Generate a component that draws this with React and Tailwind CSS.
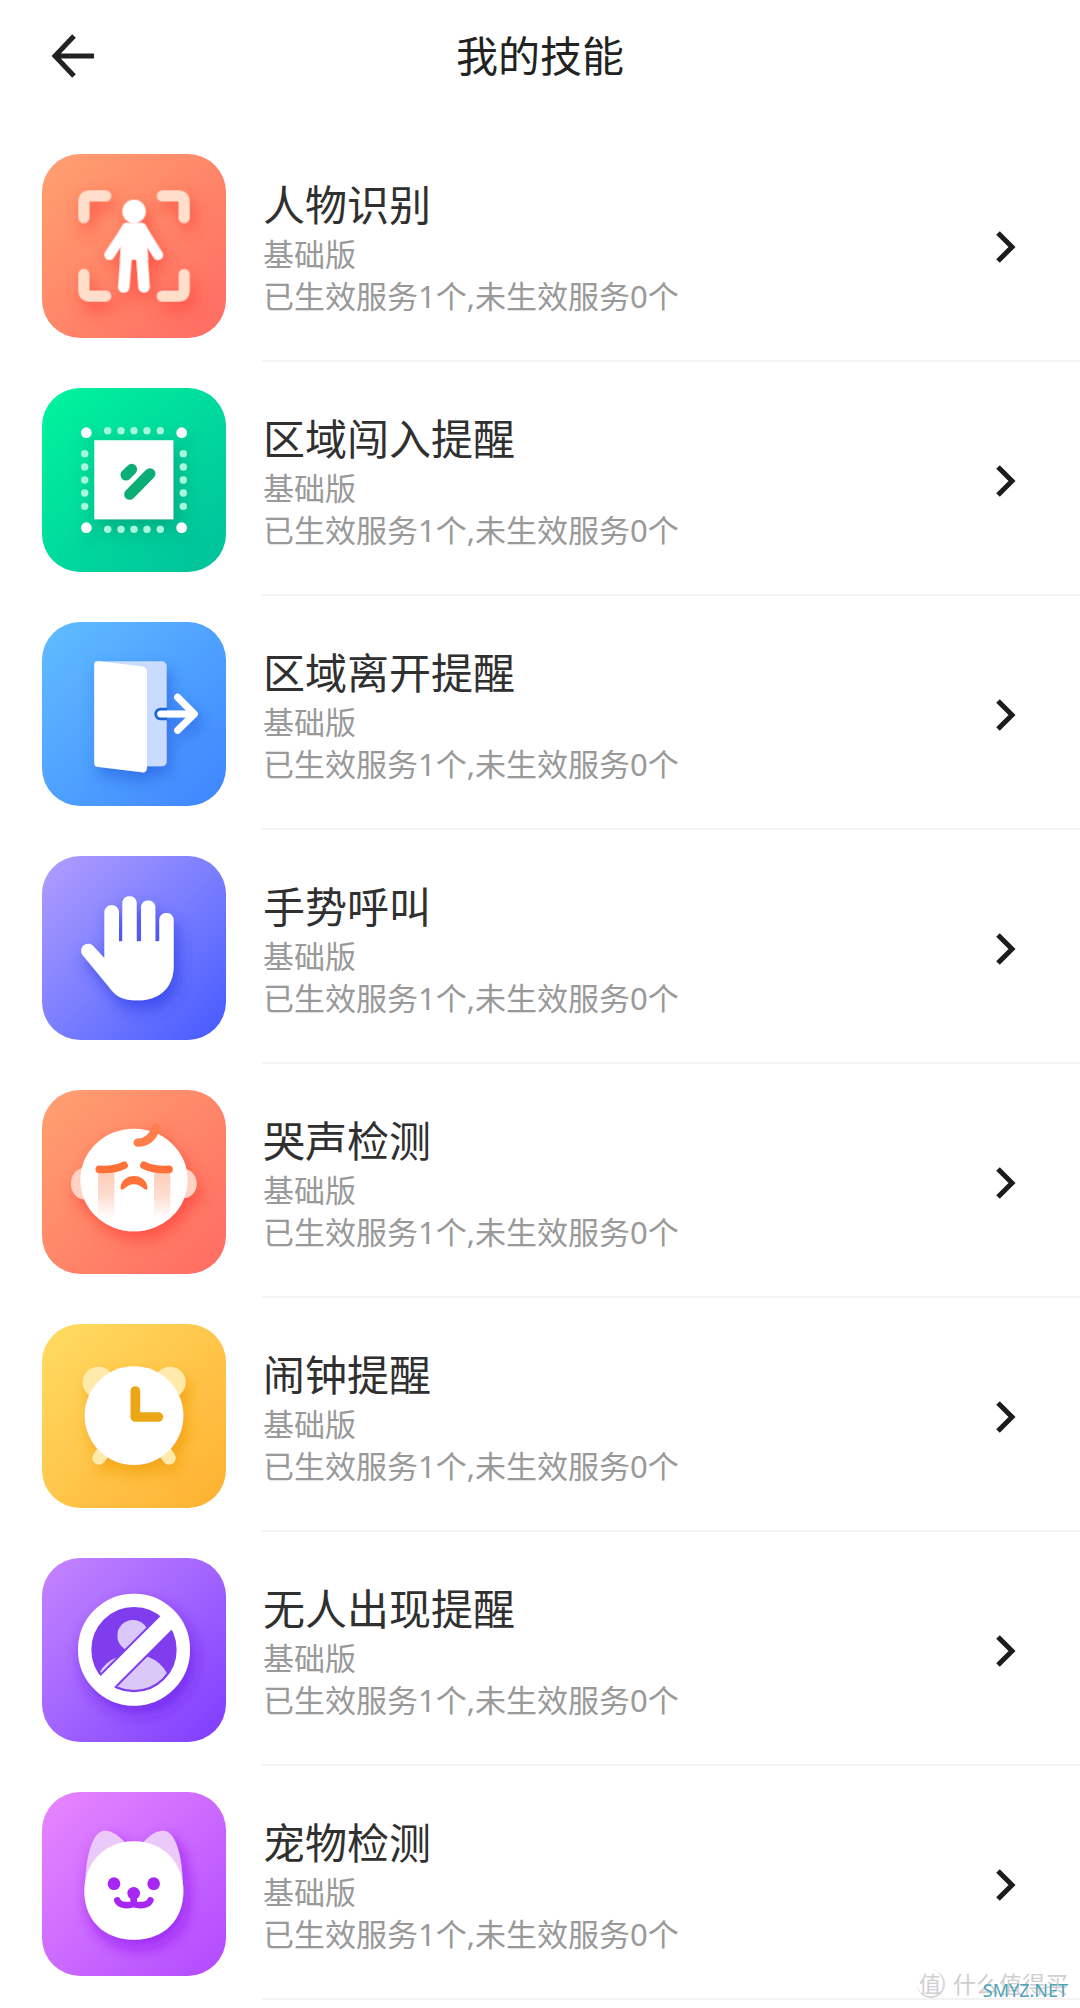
const SKILLS = [
  { name: '人物识别', tile: 'from-[#ffa070] to-[#ff6a62]', Icon: PersonIcon },
  { name: '区域闯入提醒', tile: 'from-[#00f59c] to-[#00c09c]', Icon: ZoneEnterIcon },
  { name: '区域离开提醒', tile: 'from-[#62bdff] to-[#3f84ff]', Icon: ZoneLeaveIcon },
  { name: '手势呼叫', tile: 'from-[#b39dff] to-[#4458ff]', Icon: GestureIcon },
  { name: '哭声检测', tile: 'from-[#ffa070] to-[#ff6a62]', Icon: CryIcon },
  { name: '闹钟提醒', tile: 'from-[#ffdc62] to-[#ffb02e]', Icon: AlarmIcon },
  { name: '无人出现提醒', tile: 'from-[#c684ff] to-[#8038ff]', Icon: NobodyIcon },
  { name: '宠物检测', tile: 'from-[#e986ff] to-[#b148ff]', Icon: PetIcon },
];

export default function App() {
  return (
    <div className="relative min-h-screen bg-white font-['Noto_Sans','Noto_Sans_CJK_SC',sans-serif] text-[#303030]">
      <header className="grid h-28 grid-cols-[1fr_auto_1fr] items-center px-12">
        <button type="button" aria-label="返回" className="size-12">
          <svg viewBox="0 0 48 48" className="size-12" fill="none" stroke="#222" strokeWidth="5">
            <path d="M26 4 L7 24 L26 44 M7 24 H46" />
          </svg>
        </button>
        <h1 className="text-[42px] leading-[56px] text-[#222]">我的技能</h1>
      </header>

      <main className="pt-4">
        <ul>
          {SKILLS.map((skill) => (
            <SkillRow key={skill.name} {...skill} />
          ))}
        </ul>
      </main>

      <Watermark />
    </div>
  );
}

function SkillRow({ name, tile, Icon }) {
  return (
    <li>
      <button type="button" className="flex w-full gap-9 pl-[42px] text-left">
        <span className={`mt-[26px] size-46 shrink-0 rounded-[38px] bg-linear-to-br ${tile}`}>
          <Icon />
        </span>
        <span className="flex flex-1 items-center justify-between self-stretch border-b-2 border-[#f3f3f3] pt-[49px] pr-16 pb-[43px] pl-px">
          <span className="flex flex-col">
            <span className="text-[42px] leading-[56px]">{name}</span>
            <span className="text-[31px] leading-[42px] text-[#999]">基础版</span>
            <span className="text-[31px] leading-[42px] text-[#999]">已生效服务1个,未生效服务0个</span>
          </span>
          <svg viewBox="0 0 20 32" className="h-8 w-5 shrink-0" fill="none" stroke="#1c1c1c" strokeWidth="5">
            <path d="M2 2 L16 16 L2 30" />
          </svg>
        </span>
      </button>
    </li>
  );
}

function Watermark() {
  return (
    <div className="absolute right-3 bottom-2 flex items-center gap-2 text-[#cfcfcf]">
      <span className="flex size-7 items-center justify-center rounded-full border-r-2 border-b-2 border-[#d8d8d8] text-[22px] leading-7">值</span>
      <span className="text-[23px] leading-8">什么值得买</span>
      <span className="absolute right-0 bottom-0 text-[18px] leading-5 text-[#4fa3b8]">SMYZ.NET</span>
    </div>
  );
}

// All skill icons share a 552 x 552 grid
function Glyph({ id, shadow, children }) {
  return (
    <svg viewBox="0 0 552 552" className="size-46" fill="none" aria-hidden="true">
      <defs>
        <filter id={id} x="-30%" y="-30%" width="170%" height="180%">
          <feDropShadow dx="14" dy="26" stdDeviation="24" floodColor={shadow} floodOpacity="0.7" />
        </filter>
      </defs>
      <g filter={`url(#${id})`}>{children}</g>
    </svg>
  );
}

function PersonIcon() {
  const corner = 'M109 191V145Q109 109 145 109H191a16 16 0 0 1 0 33H142V191a16 16 0 0 1-33 0Z';
  return (
    <Glyph id="person-shadow" shadow="#ff4038">
      <g fill="#ffdfcc">
        <path d={corner} />
        <path d={corner} transform="translate(552 0) scale(-1 1)" />
        <path d={corner} transform="translate(0 552) scale(1 -1)" />
        <path d={corner} transform="translate(552 552) scale(-1 -1)" />
      </g>
      <circle cx="276" cy="172" r="35" fill="#fff" />
      <path d="M252 207H300Q306 207 311 214L322 235L316 278L318 320H284L280 317H270L266 320H234L236 278L230 235L241 214Q246 207 252 207Z" fill="#fff" />
      <g stroke="#fff" strokeLinecap="round">
        <path d="M254 223L202 303M298 223L348 303" strokeWidth="30" />
        <path d="M253 300L245 399M299 300L306 399" strokeWidth="34" />
      </g>
    </Glyph>
  );
}

function ZoneEnterIcon() {
  const steps = [197, 237, 276, 315, 355];
  return (
    <Glyph id="enter-shadow" shadow="#009e78">
      {steps.map((p) => (
        <g key={p} fill="#a6f7dc">
          <circle cx={p} cy="128" r="11" />
          <circle cx={p} cy="424" r="11" />
          <circle cx="128" cy={p} r="11" />
          <circle cx="424" cy={p} r="11" />
        </g>
      ))}
      <g fill="#fff">
        <circle cx="133" cy="134" r="16" />
        <circle cx="419" cy="134" r="16" />
        <circle cx="133" cy="419" r="16" />
        <circle cx="419" cy="419" r="16" />
        <path d="M157 157H394V394H157Z" />
      </g>
      <path d="M252 261L269 244M263 319L324 257" stroke="#10ae74" strokeWidth="33" strokeLinecap="round" />
    </Glyph>
  );
}

function ZoneLeaveIcon() {
  return (
    <Glyph id="leave-shadow" shadow="#2563e0">
      <rect x="157" y="118" width="217" height="315" rx="14" fill="#c9dbff" />
      <path d="M157 126Q157 117 168 118L300 133Q315 136 315 152V436Q315 453 300 451L164 434Q157 432 157 425Z" fill="#fff" />
      <path d="M375 257H356a19 19 0 0 0 0 38H375Z" fill="#1c66d8" />
      <path d="M356 276H455M407 226L457 276L407 325" stroke="#fff" strokeWidth="21" strokeLinecap="round" strokeLinejoin="round" />
    </Glyph>
  );
}

function GestureIcon() {
  return (
    <Glyph id="gesture-shadow" shadow="#2c3ce6">
      <path
        d="M187 306V169a22 22 0 0 1 44 0V256H241V138a22 22 0 0 1 43 0V256H297V151a22 22 0 0 1 43 0V256H352V188a22 22 0 0 1 43 0V330C395 395 352 433 290 433H276C240 433 218 418 199 391L121 296C108 276 133 252 153 269Z"
        fill="#fff"
      />
    </Glyph>
  );
}

function CryIcon() {
  return (
    <Glyph id="cry-shadow" shadow="#ff4038">
      <linearGradient id="tear" x1="0" y1="0" x2="0" y2="1">
        <stop offset="0" stopColor="#ffcdb9" />
        <stop offset="0.5" stopColor="#ffdccf" />
        <stop offset="1" stopColor="#fff" />
      </linearGradient>
      <ellipse cx="126" cy="281" rx="39" ry="47" fill="#ffd2c2" />
      <ellipse cx="426" cy="281" rx="38" ry="43" fill="#ffd2c2" />
      <ellipse cx="276" cy="270" rx="161" ry="154" fill="#fff" />
      <path d="M168 245H217V385H168ZM336 245H385V385H336Z" fill="url(#tear)" />
      <g stroke="#ff7138" strokeWidth="23" strokeLinecap="round">
        <path d="M172 238Q215 241 246 226M306 226Q337 241 381 238" />
        <path d="M287 158C318 158 334 138 343 112" stroke="#ff7e4c" strokeWidth="25" />
      </g>
      <path d="M236 297V288C241 268 258 258 276 258C294 258 311 268 316 288V297Q313 302 306 296C297 289 288 283 276 283C264 283 255 289 246 296Q239 302 236 297Z" fill="#ff7138" />
    </Glyph>
  );
}

function AlarmIcon() {
  return (
    <Glyph id="alarm-shadow" shadow="#f09a00">
      <g fill="#ffe9ab" stroke="#ffe9ab" strokeLinecap="round">
        <circle cx="169" cy="175" r="47" stroke="none" />
        <circle cx="384" cy="175" r="47" stroke="none" />
        <path d="M171 402L195 366M381 402L357 366" strokeWidth="40" />
      </g>
      <circle cx="276" cy="275" r="148" fill="#fff" />
      <path d="M280 201V279H349" stroke="#eca713" strokeWidth="29" strokeLinecap="round" strokeLinejoin="round" />
    </Glyph>
  );
}

function NobodyIcon() {
  return (
    <Glyph id="nobody-shadow" shadow="#6a1eea">
      <clipPath id="nobody-clip">
        <circle cx="276" cy="275" r="121" />
      </clipPath>
      <circle cx="276" cy="275" r="135" fill="#7f3cee" />
      <g clipPath="url(#nobody-clip)">
        <circle cx="273" cy="233" r="47" fill="#d9c8f8" />
        <ellipse cx="273" cy="386" rx="112" ry="98" fill="#d9c8f8" />
        <path d="M380 187L189 378" stroke="#7f3cee" strokeWidth="64" />
      </g>
      <path d="M382 185L187 380" stroke="#fff" strokeWidth="52" />
      <circle cx="276" cy="275" r="148" stroke="#fff" strokeWidth="40" />
    </Glyph>
  );
}

function PetIcon() {
  return (
    <Glyph id="pet-shadow" shadow="#8f18f0">
      <path d="M130 270C132 195 150 125 182 117C207 113 232 131 252 156L180 270Z" fill="#ebcafb" />
      <path d="M422 270C420 195 402 125 370 117C345 113 320 131 300 156L372 270Z" fill="#ebcafb" />
      <path d="M276 148C365 148 424 215 424 297C424 383 367 443 276 443C185 443 127 383 127 297C127 215 187 148 276 148Z" fill="#fff" />
      <g fill="#a826f2">
        <circle cx="216" cy="275" r="19" />
        <circle cx="335" cy="275" r="19" />
        <circle cx="275" cy="304" r="19" />
      </g>
      <path d="M275 304V336M226 325C233 343 262 341 275 336C288 341 318 343 325 325" stroke="#a826f2" strokeWidth="20" strokeLinecap="round" />
    </Glyph>
  );
}
